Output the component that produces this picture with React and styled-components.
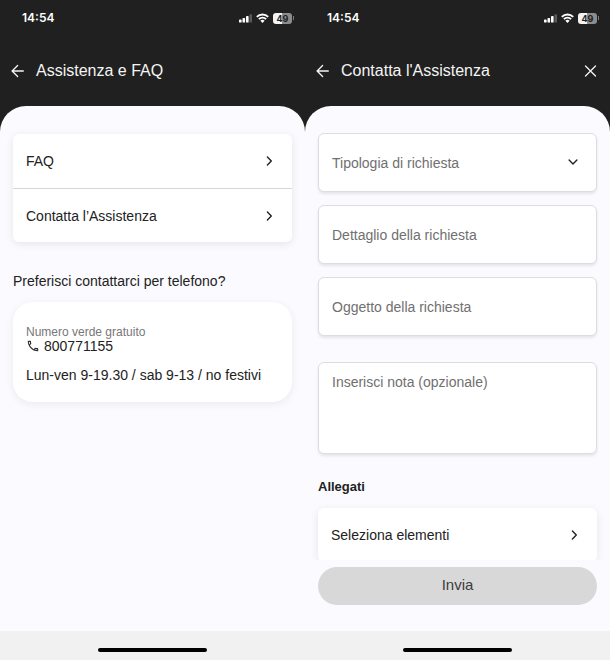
import {useState} from 'react'
import styled, {createGlobalStyle} from 'styled-components'
import {MdOutlineLocalPhone} from 'react-icons/md'

const GlobalStyle = createGlobalStyle`
  * {
    box-sizing: border-box;
  }

  body {
    margin: 0;
    background: #202020;
    color: #222;
    font-family: "Liberation Sans", Arial, sans-serif;
    font-size: 14px;
    line-height: 16px;
  }

  button, input, select, textarea {
    font: inherit;
    color: inherit;
  }
`

const Screens = styled.div`
  display: grid;
  grid-template-columns: 1fr 1fr;
  height: 100vh;
`

const Phone = styled.section`
  display: flex;
  flex-direction: column;
  min-width: 0;
  min-height: 0;
  background: #202020;
`

const StatusRow = styled.div`
  display: flex;
  align-items: center;
  justify-content: space-between;
  flex: none;
  height: 36px;
  padding: 0 11px 0 22px;
  color: #fff;
`

const Time = styled.span`
  font-family: Inter, sans-serif;
  font-size: 12px;
  font-weight: 600;
`

const Indicators = styled.div`
  display: flex;
  align-items: center;
  gap: 4px;
`

const Battery = styled.span`
  display: flex;
  align-items: center;
  gap: 1px;

  &::after {
    content: '';
    width: 1px;
    height: 4px;
    background: #7d7d7d;
  }
`

const BatteryLevel = styled.span`
  width: 19px;
  border-radius: 3px;
  background: linear-gradient(to right, #f4f4f4 50%, #8c8c8c 50%);
  color: #202020;
  font-family: Inter, sans-serif;
  font-size: 9px;
  font-weight: 700;
  line-height: 11px;
  text-align: center;
`

const Header = styled.header`
  display: flex;
  align-items: center;
  flex: none;
  gap: 12px;
  height: 70px;
  padding: 0 13px 0 11px;
  color: #f4f4f4;
`

const Title = styled.h1`
  flex: 1;
  margin: 0;
  font-size: 16px;
  font-weight: 400;
  line-height: 20px;
`

const IconButton = styled.button`
  display: flex;
  padding: 0;
  border: none;
  background: none;
  cursor: pointer;
`

const Sheet = styled.main`
  display: flex;
  flex-direction: column;
  flex: 1;
  min-height: 0;
  border-radius: 26px 26px 0 0;
  background: #fbfaff;
  overflow: hidden;
`

const Content = styled.div`
  flex: 1;
  min-height: 0;
  padding: ${props => props.$top}px 13px 0;
  overflow-y: auto;
  scrollbar-width: none;
`

const List = styled.nav`
  border-radius: 6px;
  background: #fff;
  box-shadow: 0 2px 8px rgba(0, 0, 0, 0.09);
`

const rowStyle = `
  display: flex;
  align-items: center;
  justify-content: space-between;
  width: 100%;
  height: 54px;
  padding: 0 18px 0 13px;
`

const ListRow = styled.a`
  ${rowStyle}
  color: inherit;
  text-decoration: none;

  & + & {
    border-top: 1px solid #d6d6d8;
  }
`

const PickerButton = styled.button`
  ${rowStyle}
  border: none;
  border-radius: 6px;
  background: #fff;
  box-shadow: 0 2px 8px rgba(0, 0, 0, 0.09);
  cursor: pointer;
`

const Question = styled.h2`
  margin: 31px 0 13px;
  font-size: 14px;
  font-weight: 400;
`

const PhoneCard = styled.div`
  padding: 23px 13px 19px;
  border-radius: 20px;
  background: #fff;
  box-shadow: 0 2px 8px rgba(0, 0, 0, 0.07);

  p {
    margin: 0;
  }
`

const Caption = styled.p`
  color: #777;
  font-size: 12px;
  line-height: 14px;
`

const PhoneNumber = styled.p`
  display: flex;
  align-items: center;
  gap: 4px;
  line-height: 14px;
`

const Hours = styled.p`
  padding-top: 14px;
`

const Form = styled.form`
  display: flex;
  flex-direction: column;
  flex: 1;
  min-height: 0;
`

const Fields = styled.div`
  display: flex;
  flex-direction: column;
  gap: 13px;
`

const boxStyle = `
  display: block;
  width: 100%;
  border: 1px solid #dddde1;
  border-radius: 6px;
  background: #fff;
  box-shadow: 0 2px 3px rgba(0, 0, 0, 0.09);
  color: #707070;
  outline-color: #999;

  &::placeholder {
    color: #707070;
    opacity: 1;
  }
`

const TextInput = styled.input`
  ${boxStyle}
  height: 59px;
  padding: 0 13px;
`

const Note = styled.textarea`
  ${boxStyle}
  height: 92px;
  margin-top: 13px;
  padding: 11px 13px;
  resize: none;
`

const SelectBox = styled.div`
  position: relative;

  svg {
    position: absolute;
    top: 25px;
    right: 19px;
    pointer-events: none;
  }
`

const Select = styled.select`
  ${boxStyle}
  appearance: none;
  height: 59px;
  padding: 0 40px 0 13px;
`

const AttachmentsTitle = styled.h2`
  margin: 25px 0 13px;
  font-size: 13px;
  font-weight: 700;
`

const Actions = styled.div`
  flex: none;
  padding: 7px 13px 26px;
`

const Submit = styled.button`
  display: block;
  width: 100%;
  height: 38px;
  padding: 0 0 2px;
  border: none;
  border-radius: 19px;
  background: #d8d8d8;
  color: #3c3c3c;
  font-size: 15px;
`

const HomeBar = styled.footer`
  display: flex;
  justify-content: center;
  align-items: flex-end;
  flex: none;
  height: 29px;
  padding-bottom: 8px;
  background: #f1f1f1;

  &::after {
    content: '';
    width: 109px;
    height: 4px;
    border-radius: 2px;
    background: #000;
  }
`

const Icon = ({width, height, stroke = 1, children}) =>
  <svg width={width} height={height} viewBox={`0 0 ${width} ${height}`} fill="none" stroke="currentColor" strokeWidth={stroke} strokeLinecap="round" strokeLinejoin="round" aria-hidden="true">
    {children}
  </svg>

const BackArrow = () => <Icon width={13} height={14} stroke={1.3}><path d="M12.3 7H1.2M6.6 1.5 1.1 7l5.5 5.5"/></Icon>
const Cross = () => <Icon width={13} height={14} stroke={1.3}><path d="m1.5 2 10 10M11.5 2l-10 10"/></Icon>
const ChevronRight = () => <Icon width={10} height={10} stroke={1.4}><path d="M3.4 1.1 7.3 5 3.4 8.9"/></Icon>
const ChevronDown = () => <Icon width={10} height={8} stroke={1.4}><path d="m1.1 2 3.9 3.9L8.9 2"/></Icon>

const Signal = () => <svg width="13" height="9" viewBox="0 0 13 9" fill="currentColor" aria-hidden="true">
  <rect x="0" y="5.6" width="2.6" height="3" rx="0.7"/>
  <rect x="3.5" y="4" width="2.6" height="4.6" rx="0.7"/>
  <rect x="7" y="2" width="2.6" height="6.6" rx="0.7"/>
  <rect x="10.4" y="0.2" width="2.6" height="8.4" rx="0.7" opacity="0.25"/>
</svg>

const Wifi = () => <svg width="13" height="10" viewBox="0 0 13 10" fill="none" stroke="currentColor" strokeWidth="1.9" aria-hidden="true">
  <path d="M.8 3.8a8.1 8.1 0 0 1 11.4 0"/>
  <path d="M2.9 6.2a5.1 5.1 0 0 1 7.2 0"/>
  <path d="M6.5 9.9 4.4 7.8a3 3 0 0 1 4.2 0z" fill="currentColor" stroke="none"/>
</svg>

const StatusBar = () => <StatusRow>
  <Time>14:54</Time>
  <Indicators>
    <Signal/>
    <Wifi/>
    <Battery><BatteryLevel>49</BatteryLevel></Battery>
  </Indicators>
</StatusRow>

const Screen = ({title, closable, children}) => <Phone>
  <StatusBar/>
  <Header>
    <IconButton type="button" aria-label="Indietro"><BackArrow/></IconButton>
    <Title>{title}</Title>
    {closable && <IconButton type="button" aria-label="Chiudi"><Cross/></IconButton>}
  </Header>
  <Sheet>{children}</Sheet>
  <HomeBar/>
</Phone>

const links = [
  {label: 'FAQ', href: '#faq'},
  {label: 'Contatta l’Assistenza', href: '#contatta'},
]

const Support = () => <Screen title="Assistenza e FAQ">
  <Content $top={28}>
    <List>
      {links.map(({label, href}) => <ListRow key={href} href={href}>{label}<ChevronRight/></ListRow>)}
    </List>
    <Question>Preferisci contattarci per telefono?</Question>
    <PhoneCard>
      <Caption>Numero verde gratuito</Caption>
      <PhoneNumber><MdOutlineLocalPhone size={14} color="#333"/>800771155</PhoneNumber>
      <Hours>Lun-ven 9-19.30 / sab 9-13 / no festivi</Hours>
    </PhoneCard>
  </Content>
</Screen>

const Contact = () => {
  const [values, setValues] = useState({type: '', detail: '', subject: '', note: ''})
  const bind = name => ({
    name,
    value: values[name],
    onChange: event => setValues({...values, [name]: event.target.value}),
  })

  return <Screen title="Contatta l'Assistenza" closable>
    <Form onSubmit={event => event.preventDefault()}>
      <Content $top={27}>
        <Fields>
          <SelectBox>
            <Select aria-label="Tipologia di richiesta" {...bind('type')}>
              <option value="" disabled>Tipologia di richiesta</option>
            </Select>
            <ChevronDown/>
          </SelectBox>
          <TextInput aria-label="Dettaglio della richiesta" placeholder="Dettaglio della richiesta" {...bind('detail')}/>
          <TextInput aria-label="Oggetto della richiesta" placeholder="Oggetto della richiesta" {...bind('subject')}/>
          <Note aria-label="Inserisci nota (opzionale)" placeholder="Inserisci nota (opzionale)" {...bind('note')}/>
        </Fields>
        <AttachmentsTitle>Allegati</AttachmentsTitle>
        <PickerButton type="button">Seleziona elementi<ChevronRight/></PickerButton>
      </Content>
      <Actions>
        <Submit type="submit" disabled>Invia</Submit>
      </Actions>
    </Form>
  </Screen>
}

export default function App() {
  return <>
    <GlobalStyle/>
    <Screens>
      <Support/>
      <Contact/>
    </Screens>
  </>
}
